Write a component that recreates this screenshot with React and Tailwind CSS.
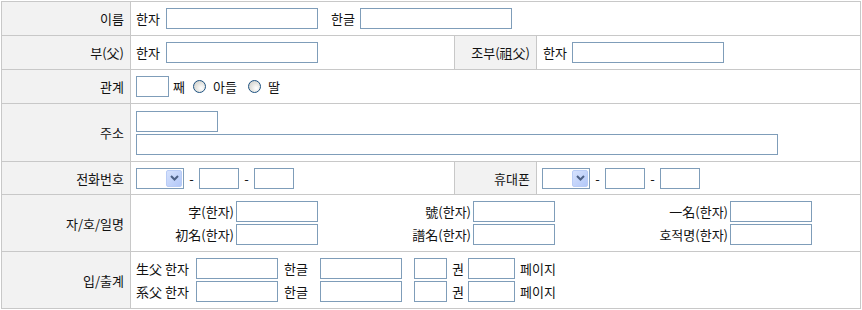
import React from "react";

const B = "border-[#c8c8c8]";
const inp = "block shrink-0 border border-[#7f9db9] bg-white h-[21px] outline-none";

function Label({ children, w = "w-[129px]" }) {
  return (
    <div className={`${w} shrink-0 border-r border-b ${B} bg-[#f2f2f2] flex items-center justify-end pr-[6px]`}>
      {children}
    </div>
  );
}

function Cell({ children, w = "w-[730px]", cls = "pl-[5px]" }) {
  return (
    <div className={`${w} shrink-0 border-r border-b ${B} bg-white flex items-center ${cls}`}>
      {children}
    </div>
  );
}

function Input({ w }) {
  return <input type="text" className={`${inp} ${w}`} />;
}

function Radio() {
  return (
    <span className="block shrink-0 w-[13px] h-[13px] rounded-full border border-[#1c5180] bg-[radial-gradient(circle_at_65%_65%,#ffffff_0%,#e6e6e2_45%,#c9c9c4_100%)]" />
  );
}

function Select() {
  return (
    <div className="flex shrink-0 w-[48px] h-[21px] border border-[#7f9db9] bg-white items-center justify-end pr-px">
      <div className="w-[16px] h-[17px] rounded-[2px] border border-[#b9ccf6] bg-[linear-gradient(135deg,#d6e2fd,#b3c8f8)] flex items-center justify-center">
        <svg width="9" height="6" viewBox="0 0 9 6">
          <path d="M1 1 L4.5 4.5 L8 1" fill="none" stroke="#4d6185" strokeWidth="2" />
        </svg>
      </div>
    </div>
  );
}

function Dash() {
  return <span className="w-[15px] shrink-0 text-center">-</span>;
}

export default function App() {
  return (
    <div
      className="pl-px pt-px bg-white text-[13px] leading-[15px] text-[#111]"
      style={{ fontFamily: '"Noto Sans CJK KR", "Noto Sans", sans-serif' }}
    >
      <div className={`w-[860px] border-l border-t ${B}`}>
        {/* 이름 */}
        <div className="flex h-[34px]">
          <Label>이름</Label>
          <Cell>
            <span className="w-[30px] shrink-0">한자</span>
            <Input w="w-[152px]" />
            <span className="ml-[13px] w-[29px] shrink-0">한글</span>
            <Input w="w-[152px]" />
          </Cell>
        </div>

        {/* 부 / 조부 */}
        <div className="flex h-[34px]">
          <Label>부(父)</Label>
          <Cell w="w-[324px]">
            <span className="w-[30px] shrink-0">한자</span>
            <Input w="w-[152px]" />
          </Cell>
          <Label w="w-[82px]">조부(祖父)</Label>
          <Cell w="w-[324px]" cls="pl-[6px]">
            <span className="w-[29px] shrink-0">한자</span>
            <Input w="w-[152px]" />
          </Cell>
        </div>

        {/* 관계 */}
        <div className="flex h-[34px]">
          <Label>관계</Label>
          <Cell>
            <Input w="w-[33px]" />
            <span className="ml-[4px] w-[13px] shrink-0">째</span>
            <span className="ml-[7px]">
              <Radio />
            </span>
            <span className="ml-[7px] w-[26px] shrink-0">아들</span>
            <span className="ml-[9px]">
              <Radio />
            </span>
            <span className="ml-[7px]">딸</span>
          </Cell>
        </div>

        {/* 주소 */}
        <div className="flex h-[58px]">
          <Label>주소</Label>
          <Cell>
            <div className="flex flex-col gap-[2px]">
              <Input w="w-[82px]" />
              <Input w="w-[642px]" />
            </div>
          </Cell>
        </div>

        {/* 전화번호 / 휴대폰 */}
        <div className="flex h-[33px]">
          <Label>전화번호</Label>
          <Cell w="w-[324px]">
            <Select />
            <Dash />
            <Input w="w-[40px]" />
            <Dash />
            <Input w="w-[40px]" />
          </Cell>
          <Label w="w-[82px]">휴대폰</Label>
          <Cell w="w-[324px]">
            <Select />
            <Dash />
            <Input w="w-[40px]" />
            <Dash />
            <Input w="w-[40px]" />
          </Cell>
        </div>

        {/* 자/호/일명 */}
        <div className="flex h-[57px]">
          <Label>자/호/일명</Label>
          <Cell cls="pl-0">
            <div className="grid grid-cols-[105px_82px_155px_82px_175px_82px] gap-y-[2px] items-center">
              <span className="text-right pr-[2px]">字(한자)</span>
              <Input w="w-[82px]" />
              <span className="text-right pr-[2px]">號(한자)</span>
              <Input w="w-[82px]" />
              <span className="text-right pr-[2px]">一名(한자)</span>
              <Input w="w-[82px]" />
              <span className="text-right pr-[2px]">初名(한자)</span>
              <Input w="w-[82px]" />
              <span className="text-right pr-[2px]">譜名(한자)</span>
              <Input w="w-[82px]" />
              <span className="text-right pr-[2px]">호적명(한자)</span>
              <Input w="w-[82px]" />
            </div>
          </Cell>
        </div>

        {/* 입/출계 */}
        <div className="flex h-[57px]">
          <Label>입/출계</Label>
          <Cell>
            <div className="flex flex-col gap-[2px]">
              {["生父", "系父"].map((p) => (
                <div key={p} className="flex items-center">
                  <span className="w-[60px] shrink-0">{p} 한자</span>
                  <Input w="w-[82px]" />
                  <span className="w-[42px] shrink-0 pl-[6px]">한글</span>
                  <Input w="w-[82px]" />
                  <span className="w-[12px] shrink-0" />
                  <Input w="w-[33px]" />
                  <span className="w-[21px] shrink-0 pl-[5px]">권</span>
                  <Input w="w-[47px]" />
                  <span className="pl-[5px]">페이지</span>
                </div>
              ))}
            </div>
          </Cell>
        </div>
      </div>
    </div>
  );
}
